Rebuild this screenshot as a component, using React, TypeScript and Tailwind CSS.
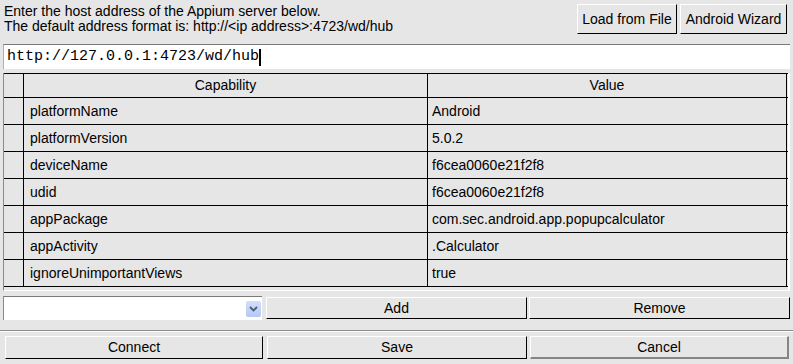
const caps: [string, string][] = [
  ["platformName", "Android"],
  ["platformVersion", "5.0.2"],
  ["deviceName", "f6cea0060e21f2f8"],
  ["udid", "f6cea0060e21f2f8"],
  ["appPackage", "com.sec.android.app.popupcalculator"],
  ["appActivity", ".Calculator"],
  ["ignoreUnimportantViews", "true"],
];

const btn =
  "flex items-center justify-center border-t border-l border-t-white border-l-white border-b border-r border-b-black border-r-black bg-[#e6e6e6] text-[14px]";

const App = () => {
  return (
    <div
      className="w-[793px] h-[364px] bg-[#e6e6e6] text-black text-[14px] overflow-hidden"
      style={{ fontFamily: '"Liberation Sans", Arial, sans-serif' }}
    >
      {/* header */}
      <div className="flex justify-between items-start h-[40px]">
        <div className="pl-[4px] pt-[4px] leading-[15px]">
          <div>Enter the host address of the Appium server below.</div>
          <div>The default address format is: http://&lt;ip address&gt;:4723/wd/hub</div>
        </div>
        <div className="flex gap-[3px] pt-[4px] pr-[6px]">
          <div className={btn + " w-[100px] h-[30px]"}>Load from File</div>
          <div className={btn + " w-[107px] h-[30px]"}>Android Wizard</div>
        </div>
      </div>

      {/* url */}
      <div className="mx-[3px] mt-[4px] h-[25px] bg-white border-t border-l border-t-[#7a7a7a] border-l-[#b0b0b0] flex items-center pl-[3px]">
        <span
          className="text-[15px] leading-[18px]"
          style={{ fontFamily: '"Liberation Mono", "Courier New", monospace' }}
        >
          http://127.0.0.1:4723/wd/hub
        </span>
        <span className="w-[2px] h-[17px] bg-black" />
      </div>

      {/* table */}
      <div className="mx-[3px] mt-[4px] h-[218px] border-l border-l-[#8a8a8a] border-r-2 border-r-white border-b border-b-white">
        <div className="grid grid-cols-[20px_404px_359px] h-[25px] border-t border-b border-black">
          <div className="border-r border-black" />
          <div className="border-r border-black flex items-center justify-center">Capability</div>
          <div className="border-r border-black flex items-center justify-center">Value</div>
        </div>
        {caps.map(([k, v]) => (
          <div key={k} className="grid grid-cols-[20px_404px_359px] h-[27px] border-b border-black">
            <div className="border-r border-black" />
            <div className="border-r border-black flex items-center pl-[6px]">{k}</div>
            <div className="border-r border-black flex items-center pl-[4px]">{v}</div>
          </div>
        ))}
      </div>

      {/* add/remove */}
      <div className="flex items-start mt-[5px] ml-[3px]">
        <div className="w-[259px] h-[24px] bg-white border-t border-l border-t-[#7a7a7a] border-l-[#8a8a8a] flex items-center justify-end pr-[1px]">
          <div className="w-[15px] h-[16px] rounded-[2px] bg-gradient-to-b from-[#d4e0fa] to-[#b3c8f3] flex items-center justify-center">
            <svg width="9" height="6" viewBox="0 0 9 6">
              <path d="M1 1 L4.5 4.5 L8 1" stroke="#4a5a78" strokeWidth="1.8" fill="none" />
            </svg>
          </div>
        </div>
        <div className={btn + " ml-[4px] w-[261px] h-[22px] mt-[1px]"}>Add</div>
        <div className={btn + " ml-[2px] w-[261px] h-[22px] mt-[1px]"}>Remove</div>
      </div>

      {/* separator */}
      <div className="mt-[10px] h-[2px] border-t border-t-[#8c8c8c] border-b border-b-white" />

      {/* bottom buttons */}
      <div className="flex mt-[4px] ml-[5px]">
        <div className={btn + " w-[258px] h-[23px]"}>Connect</div>
        <div className={btn + " ml-[4px] w-[260px] h-[23px]"}>Save</div>
        <div className="ml-[3px] w-[259px] h-[23px] flex items-center justify-center border-t border-l border-t-white border-l-white border-b-2 border-r-2 border-b-[#858585] border-r-[#858585]">
          Cancel
        </div>
      </div>
    </div>
  );
};

export default App;
